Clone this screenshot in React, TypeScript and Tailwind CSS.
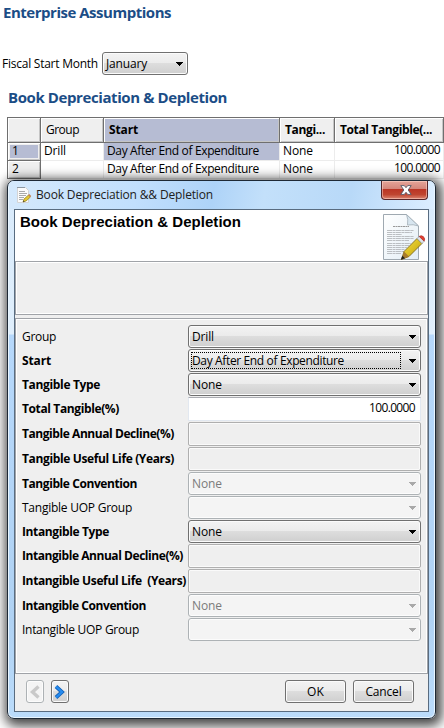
import { useLayoutEffect, useRef, useState } from "react";
import clsx from "clsx";

/** Text set to a given measure by spreading the difference over its letters. */
function T({ children, w, className }: { children: string; w: number; className?: string }) {
  const ref = useRef<HTMLSpanElement>(null);
  const [ls, setLs] = useState(0);
  useLayoutEffect(() => {
    if (ref.current) setLs((w - ref.current.getBoundingClientRect().width) / children.length);
  }, []);
  return (
    <span ref={ref} style={{ letterSpacing: ls }} className={clsx("inline-block shrink-0 whitespace-pre", className)}>
      {children}
    </span>
  );
}

function Arrow({ disabled }: { disabled?: boolean }) {
  return (
    <svg width="7" height="4" viewBox="0 0 7 4" shapeRendering="crispEdges" className="shrink-0">
      <path d="M0 0h7v1H6v1H5v1H4v1H3V3H2V2H1V1H0z" fill={disabled ? "#a9a9a9" : "#000"} />
    </svg>
  );
}

const raised =
  "rounded-[3px] border border-[#707070] bg-[linear-gradient(#f3f3f3_0%,#ebebeb_48%,#dddddd_50%,#cfcfcf_100%)] shadow-[inset_0_0_0_1px_#fbfbfb]";
const flat = "rounded-[3px] border border-[#adb2b5] bg-[#f4f4f4] shadow-[inset_0_0_0_1px_#fcfcfc]";

type Field = { label: string; lw: number; bold?: boolean; kind: "combo" | "off" | "blank" | "number"; value?: string; vw?: number; focus?: boolean };

const fields: Field[] = [
  { label: "Group", lw: 34, kind: "combo", value: "Drill", vw: 22 },
  { label: "Start", lw: 29, bold: true, kind: "combo", value: "Day After End of Expenditure", vw: 152, focus: true },
  { label: "Tangible Type", lw: 78, bold: true, kind: "combo", value: "None", vw: 30 },
  { label: "Total Tangible(%)", lw: 97, bold: true, kind: "number", value: "100.0000", vw: 46 },
  { label: "Tangible Annual Decline(%)", lw: 152, bold: true, kind: "blank" },
  { label: "Tangible Useful Life (Years)", lw: 152, bold: true, kind: "blank" },
  { label: "Tangible Convention", lw: 115, bold: true, kind: "off", value: "None", vw: 30 },
  { label: "Tangible UOP Group", lw: 110, kind: "off" },
  { label: "Intangible Type", lw: 87, bold: true, kind: "combo", value: "None", vw: 30 },
  { label: "Intangible Annual Decline(%)", lw: 161, bold: true, kind: "blank" },
  { label: "Intangible Useful Life  (Years)", lw: 164, bold: true, kind: "blank" },
  { label: "Intangible Convention", lw: 124, bold: true, kind: "off", value: "None", vw: 30 },
  { label: "Intangible UOP Group", lw: 117, kind: "off" },
];

function FieldRow({ f }: { f: Field }) {
  const combo = f.kind === "combo" || f.kind === "off";
  return (
    <div className={clsx("flex items-center", combo ? "h-[23px]" : "h-6")}>
      <div className="flex w-[166px] shrink-0 items-center">
        <T w={f.lw} className={f.bold ? "font-bold [font-stretch:90%]" : ""}>{f.label}</T>
      </div>
      <div
        className={clsx(
          "flex h-full w-[233px] items-center justify-between",
          f.kind === "combo" && raised,
          f.kind === "off" && flat,
          f.kind === "blank" && "rounded-[2px] border border-[#afafaf] bg-[#efefef] shadow-[inset_0_0_0_1px_#fafafa]",
          f.kind === "number" && "border border-[#e2e8f0] border-t-[#abadb3] bg-white",
          combo && "pl-[2px] pr-[4px]",
        )}
      >
        {f.kind === "number" ? (
          <T w={f.vw!} className="ml-auto mr-[5px] -mt-[3px]">{f.value!}</T>
        ) : (
          combo && (
            <>
              <div className={clsx("flex h-[17px] w-[210px] items-center border border-dotted", f.focus ? "border-black" : "border-transparent")}>
                {f.value && <T w={f.vw!} className={f.kind === "off" ? "text-[#7b7b7b]" : ""}>{f.value}</T>}
              </div>
              <Arrow disabled={f.kind === "off"} />
            </>
          )
        )}
      </div>
    </div>
  );
}

function SmallPage() {
  return (
    <svg width="16" height="16" viewBox="0 0 16 16" className="shrink-0">
      <path d="M1.500.5h8l3 3v12h-11z" fill="#fbfbfb" stroke="#d4d4d4" />
      <path d="M1 .5h8" stroke="#8d98a2" />
      <path d="M3 4.500h6M3 6.500h8M3 8.500h7M3 10.500h5M3 12.500h4" stroke="#aaa" />
      <path d="m7 15 1-3 4.500-4 2 2-4.500 4z" fill="#e2c634" stroke="#95811c" strokeWidth=".7" />
      <path d="m12.300 8 1-.9 1.900 1.900-1 .9z" fill="#c87d54" />
      <path d="m7 15 .6-1.600 1 1z" fill="#333" />
    </svg>
  );
}

function LargePage() {
  return (
    <svg width="44" height="47" viewBox="0 0 44 47" className="shrink-0">
      <defs>
        <linearGradient id="sheet" x1="0" y1="0" x2="1" y2="1">
          <stop offset="0" stopColor="#fff" />
          <stop offset="1" stopColor="#e2edf5" />
        </linearGradient>
        <linearGradient id="wood" x1="0" y1="0" x2="1" y2="1">
          <stop offset="0" stopColor="#f5e34a" />
          <stop offset=".55" stopColor="#d9bd20" />
          <stop offset="1" stopColor="#9b7f0c" />
        </linearGradient>
      </defs>
      <path d="M.5.5h23l12 11.500v33.500H.5z" fill="url(#sheet)" stroke="#9fa9b1" />
      <path d="M23.500.5q2 5 1 10.500 6-1 11 1z" fill="#d7e5ef" stroke="#a1adb6" strokeWidth=".8" />
      <path d="M10 12.500h16" stroke="#999" strokeDasharray="2 .5" />
      <path
        d="M4 16.500h27M4 18.500h25M4 20.500h15M4 22.500h27M4 24.500h27M4 26.500h22M4 29.500h24M4 31.500h22M4 33.500h20M4 35.500h18M4 37.500h17M4 39.500h14"
        stroke="#b4b8bb"
        strokeDasharray="5 .5 3 .4"
        strokeWidth=".9"
      />
      <path d="m18.500 45.500 2.500-8 13-13 5 5-13 13z" fill="url(#wood)" stroke="#756018" strokeWidth=".8" />
      <path d="m18.500 45.500 2.500-8 5 5z" fill="#a77b2d" />
      <path d="m17.800 45.700 1.500-4 2.800 2.600z" fill="#222" />
      <path d="m34 24.500 2.200-2.100 5 4.800-2.200 2.300z" fill="#dfe4ea" stroke="#88919a" strokeWidth=".6" />
      <path d="M36.200 22.400q2-1.500 4.300.3 2 2.300.7 4.500z" fill="#e63d2e" stroke="#a82d28" strokeWidth=".7" />
    </svg>
  );
}

function Dialog() {
  return (
    <div className="absolute left-[7px] top-[180px] flex h-[539px] w-[429px] flex-col rounded-[7px] border border-[#1e2935] bg-[linear-gradient(#d8eafb_0px,#e0effc_153px,#b6d8fb_154px,#b0d2f3_440px,#bbdcfb_100%)] px-[6px] pb-[6px] shadow-[inset_0_0_0_1px_#e8f5ff,2px_3px_12px_4px_rgba(0,0,0,0.72)]">
      <div className="-mx-[5px] flex h-[28px] shrink-0 items-start justify-between rounded-t-[5px] bg-[linear-gradient(100deg,#d5e9fc_0%,#c1dffd_30%,#aed3f8_48%,#c3e0fa_60%,#b8d9f8_80%,#dceeff_100%)] pl-[7px] pr-[6px]">
        <div className="flex items-center gap-[4px] pt-[5px]">
          <SmallPage />
          <T w={177} className="leading-[18px] text-[#202020]">Book Depreciation &amp;&amp; Depletion</T>
        </div>
        <div className="flex h-[19px] w-[47px] items-center justify-center rounded-b-[4px] border border-t-0 border-[#55252a] bg-[linear-gradient(#e5a499_0%,#d4857a_45%,#bb3525_47%,#bf4530_75%,#dc8572_100%)] pl-[2px] shadow-[inset_0_0_0_1px_rgba(255,220,210,0.5)]">
          <svg width="12" height="10" viewBox="0 0 12 10">
            <path d="M.8.6h3.500L6 2.700 7.700.6h3.500L8.200 5l3 4.400H7.700L6 7.300 4.300 9.400H.8L3.800 5z" fill="#fff" stroke="#545766" strokeWidth=".9" />
          </svg>
        </div>
      </div>
      <div className="flex min-h-0 flex-1 flex-col border border-[#596c80] bg-[#efefef]">
        <div className="flex h-[51px] shrink-0 items-start justify-between bg-white pl-[5px] pr-px pt-[4px]">
          <T w={221} className="-mt-px font-['Liberation_Sans',sans-serif] text-[15px] font-bold leading-[17px]">Book Depreciation &amp; Depletion</T>
          <LargePage />
        </div>
        <div className="h-[54px] shrink-0 border border-[#a0a3a8] shadow-[inset_0_0_0_1px_#fff]" />
        <div className="mt-[3px] flex h-[356px] shrink-0 flex-col gap-px border border-[#a0a3a8] pl-[6px] pt-[6px] shadow-[inset_0_0_0_1px_#fff]">
          {fields.map((f) => (
            <FieldRow key={f.label} f={f} />
          ))}
        </div>
        <div className="flex items-center pl-[11px] pr-[14px] pt-[6px]">
          <div className={clsx("mr-[7px] flex h-[23px] w-[18px] items-center justify-center", flat)}>
            <svg width="12" height="14" viewBox="0 0 12 14"><path d="m9.500 1.500-6 5.500 6 5.500" fill="none" stroke="#c9c9c9" strokeWidth="3.400" /></svg>
          </div>
          <div className={clsx("flex h-[23px] w-[18px] items-center justify-center", raised)}>
            <svg width="12" height="14" viewBox="0 0 12 14">
              <path d="m2 1.500 6 5.500-6 5.500" fill="none" stroke="#1462b8" strokeWidth="3.800" />
              <path d="m2 1.500 6 5.500-6 5.500" fill="none" stroke="#268cf0" strokeWidth="2.200" />
            </svg>
          </div>
          <div className={clsx("ml-auto flex h-[23px] w-[61px] items-center justify-center", raised)}><T w={17}>OK</T></div>
          <div className={clsx("ml-[7px] flex h-[23px] w-[61px] items-center justify-center", raised)}><T w={36}>Cancel</T></div>
        </div>
      </div>
    </div>
  );
}

const head = "flex items-center border-b border-r border-[#6f6f6f] bg-[#efefef] shadow-[inset_1px_1px_0_#fff,inset_-1px_-1px_0_#c5c5c5]";
const cell = "flex items-center border-b border-r border-[#ececec] pb-px";

export default function App() {
  return (
    <main className="relative h-[728px] w-[444px] overflow-hidden bg-white font-['Open_Sans','Noto_Sans',sans-serif] text-[12px] leading-[16px] text-black">
      <h1 className="flex h-[24px] items-center pb-px pl-[3px] text-[15px] font-bold text-[#1b4d86] [font-stretch:92%]"><T w={168}>Enterprise Assumptions</T></h1>
      <div className="mt-[28px] flex items-center pl-[2px]">
        <T w={96}>Fiscal Start Month</T>
        <div className={clsx("ml-[4px] flex h-[23px] w-[86px] items-center justify-between pl-[3px] pr-[4px]", raised)}>
          <T w={41}>January</T>
          <Arrow />
        </div>
      </div>
      <h2 className="mt-[10px] flex h-[24px] items-center pb-px pl-[8px] text-[15px] font-bold text-[#1b4d86] [font-stretch:92%]"><T w={219}>Book Depreciation &amp; Depletion</T></h2>
      <div className="ml-[7px] mt-[8px] grid w-[437px] grid-cols-[34px_63px_176px_55px_109px] grid-rows-[25px_18px_18px] border-t border-[#6f6f6f]">
        <div className={clsx(head, "border-l")} />
        <div className={clsx(head, "pl-[5px]")}><T w={33}>Group</T></div>
        <div className={clsx(head, "pl-[5px]", "bg-[#b6bcd3]!")}><T w={29} className="font-bold [font-stretch:90%]">Start</T></div>
        <div className={clsx(head, "pl-[5px]")}><T w={40} className="font-bold [font-stretch:90%]">Tangi...</T></div>
        <div className={clsx(head, "pl-[5px]")}><T w={92} className="font-bold [font-stretch:90%]">Total Tangible(...</T></div>
        <div className={clsx(head, "border-l p-[2px]")}><div className="flex h-full w-full items-center bg-[#b6bcd3] pb-px pl-[2px]">1</div></div>
        <div className={clsx(cell, "pl-[3px]")}><T w={22}>Drill</T></div>
        <div className={clsx(cell, "bg-[#b6bcd3] pl-[3px]")}><T w={152}>Day After End of Expenditure</T></div>
        <div className={clsx(cell, "pl-[3px]")}><T w={30}>None</T></div>
        <div className={clsx(cell, "justify-end pb-[3px]! pr-[3px]")}><T w={46}>100.0000</T></div>
        <div className={clsx(head, "border-l pb-px pl-[4px]")}>2</div>
        <div className={cell} />
        <div className={clsx(cell, "pl-[3px]")}><T w={152}>Day After End of Expenditure</T></div>
        <div className={clsx(cell, "pl-[3px]")}><T w={30}>None</T></div>
        <div className={clsx(cell, "justify-end pb-[3px]! pr-[3px]")}><T w={46}>100.0000</T></div>
      </div>
      <Dialog />
    </main>
  );
}
